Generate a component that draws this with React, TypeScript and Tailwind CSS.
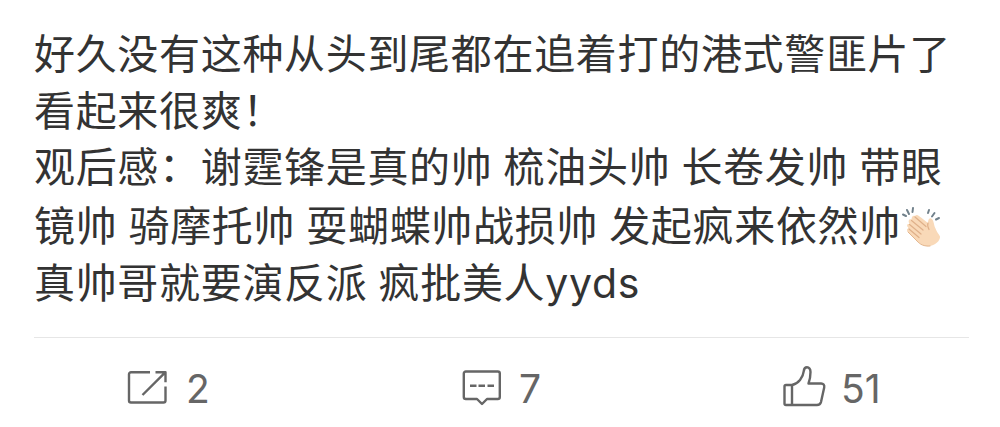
import type { ReactNode } from "react";

interface Line {
  text: string;
  className: string;
  emoji?: boolean;
}

const LINES: Line[] = [
  { text: "好久没有这种从头到尾都在追着打的港式警匪片了", className: "h-[57px]" },
  { text: "看起来很爽！", className: "h-[56px]" },
  { text: "观后感：谢霆锋是真的帅 梳油头帅 长卷发帅 带眼", className: "h-[59px]" },
  { text: "镜帅 骑摩托帅 耍蝴蝶帅战损帅 发起疯来依然帅", className: "h-[57px]", emoji: true },
  { text: "真帅哥就要演反派 疯批美人yyds", className: "h-[57px]" },
];

function ClapIcon() {
  return (
    <svg width="40" height="42" viewBox="0 0 40 42" fill="none" className="mt-[8px] shrink-0">
      <g stroke="#71818b" strokeWidth="2" strokeLinecap="round">
        <path d="M2 8.500l3 1.500M6 4l2 4M12 2l-.5 4M28 4l-1 3M33.500 7L31 10.500M38 12l-3 1.500" />
      </g>
      <path
        d="M14 10c2-2.500 4 0 6 1.500l7 5.500c0-3 1-5.500 3-4.500 3 1 2.500 6 4.500 10 1.500 4 3 5 4.500 8 .5 4-5 9-10 9.500-6 1-10-2-13-5L7 26c-2-2.500-.5-4 1-3.500-3-3-2-5 .5-4.500-2-3.500 0-5.500 2-4.500 0-2.500 1.500-4.500 3.500-3.500z"
        fill="#f9d9b8"
      />
      <path
        d="M14 11l11 9.500M10.500 14.500L22 24M8.500 18.500L20 28M8 23l10 8.500M27 17c-1 2.500 0 4.500 1 6.500"
        stroke="#dfb08a"
        strokeWidth="1.200"
        strokeLinecap="round"
      />
      <path d="M7 26l9 9c3 3.500 7 5.500 13 5" stroke="#e3b68e" strokeWidth="1" strokeLinecap="round" />
    </svg>
  );
}

function ShareIcon() {
  return (
    <svg width="42" height="36" viewBox="0 0 42 36" fill="none" stroke="#666" strokeWidth="2.400" strokeLinejoin="round">
      <path d="M24 2.200H5a2 2 0 0 0-2 2v26.300a2 2 0 0 0 2 2h32.500a2 2 0 0 0 2-2V16.500" />
      <path d="M29.500 2.200h10v10M39.500 2.200L16.500 25" />
    </svg>
  );
}

function CommentIcon() {
  return (
    <svg width="40" height="38" viewBox="0 0 40 38" fill="none" stroke="#666" strokeWidth="2.400" strokeLinejoin="round">
      <path d="M4.800 2.500h32a2 2 0 0 1 2 2V28a2 2 0 0 1-2 2H26l-5 5-5-5H4.800a2 2 0 0 1-2-2V4.500a2 2 0 0 1 2-2z" />
      <path d="M9 16.700h6.500M17.500 16.700H24M26.500 16.700H33" />
    </svg>
  );
}

function LikeIcon() {
  return (
    <svg
      width="44"
      height="42"
      viewBox="0 0 44 42"
      fill="none"
      stroke="#666"
      strokeWidth="2.400"
      strokeLinejoin="round"
      className="-mt-1"
    >
      <path d="M10 20H4a1.500 1.500 0 0 0-1.500 1.500v17A1.500 1.500 0 0 0 4 40h31c2 0 3.500-1 4-3l3.200-14.500c.5-2.500-1-4-3-4H26.500c1.500-4 2-8 2-11.500 0-3-1.500-4.700-3.500-4.700s-3 1.500-3.300 4C21 12.500 16.500 18.500 10 20z" />
      <path d="M10 20v20" />
    </svg>
  );
}

interface ActionProps {
  icon: ReactNode;
  count: number;
  className: string;
}

function Action({ icon, count, className }: ActionProps) {
  return (
    <button type="button" className={className}>
      {icon}
      <span className="leading-none">{count}</span>
    </button>
  );
}

export default function App() {
  return (
    <article className="h-[427px] w-[1000px] overflow-hidden bg-white pl-[34px] pr-[31px] pt-[26px] font-['Inter','Noto_Sans_CJK_SC',sans-serif] text-[#333]">
      <div className="h-[311px] text-[41px] tracking-[0.680px] [word-spacing:-1.100px]">
        {LINES.map(({ text, className, emoji }) => (
          <p key={text} className={`flex whitespace-nowrap leading-[57px] ${className}`}>
            {text}
            {emoji && <ClapIcon />}
          </p>
        ))}
      </div>

      <footer className="flex h-[90px] border-t border-[#e6e6e6] text-[39px] text-[#666]">
        <Action icon={<ShareIcon />} count={2} className="ml-[92px] flex h-[100px] w-[335px] items-center gap-[18px]" />
        <Action icon={<CommentIcon />} count={7} className="flex h-[100px] w-[321px] items-center gap-[18px]" />
        <Action icon={<LikeIcon />} count={51} className="flex h-[100px] items-center gap-[15px]" />
      </footer>
    </article>
  );
}
